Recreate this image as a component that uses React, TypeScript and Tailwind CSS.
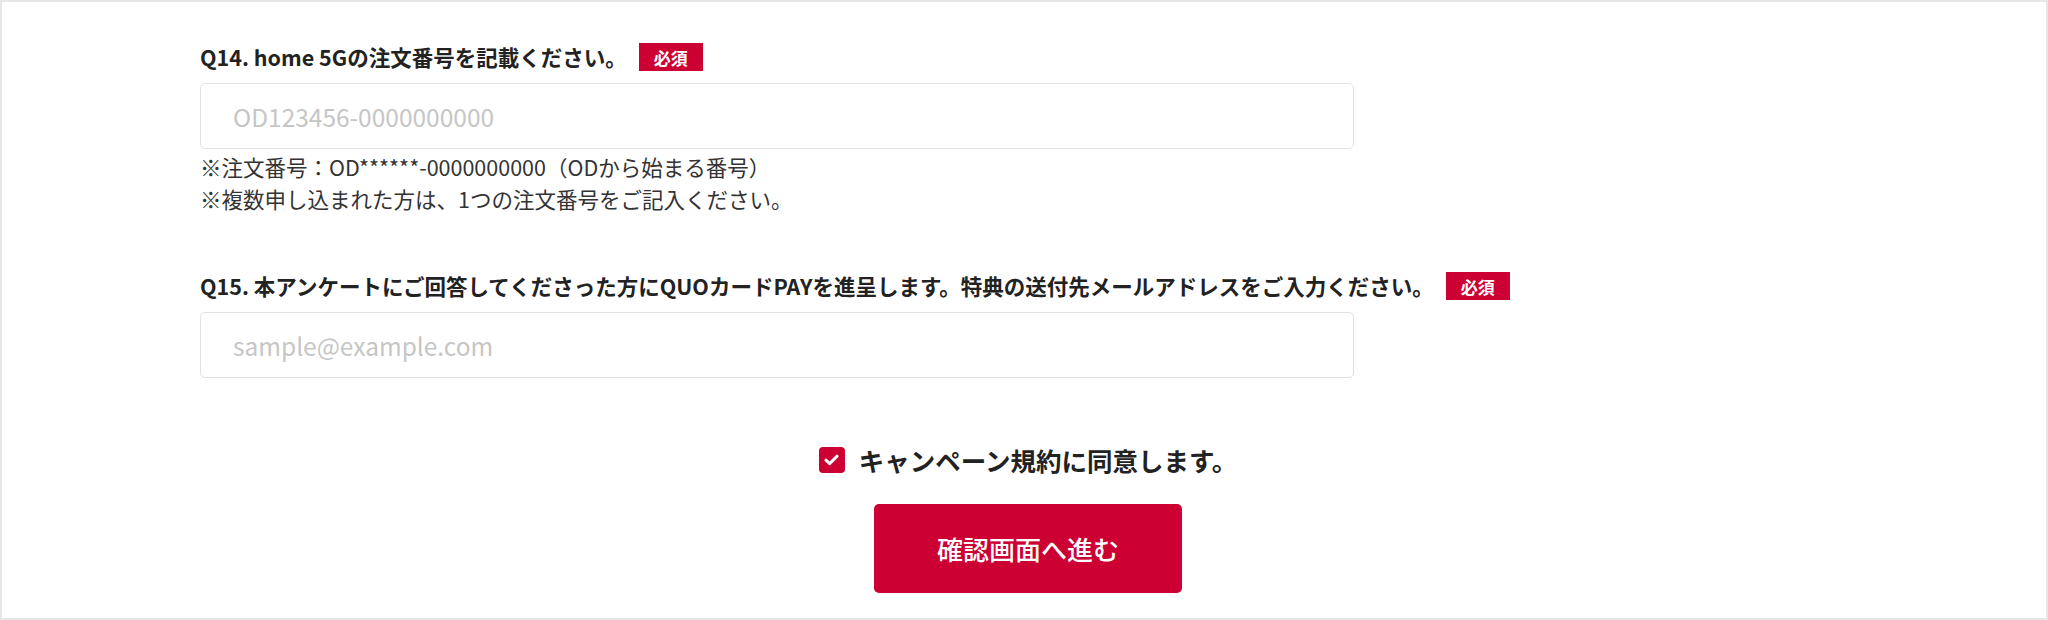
import React from "react";

const font = { fontFamily: '"Noto Sans CJK JP", "Noto Sans", sans-serif' };

function Badge() {
  return (
    <span className="ml-[12px] inline-flex h-[28px] w-[64px] items-center justify-center bg-[#cc0033] text-[17px] font-bold leading-none text-white">
      必須
    </span>
  );
}

export default function App() {
  return (
    <div
      className="h-[620px] w-[2048px] border-2 border-[#e6e6e6] bg-white px-[198px] pt-[41px] text-[#222]"
      style={font}
    >
      <div className="flex h-[28px] items-center">
        <span className="text-[21.5px] font-bold leading-none">Q14. home 5Gの注文番号を記載ください。</span>
        <Badge />
      </div>
      <input
        type="text"
        placeholder="OD123456-0000000000"
        className="mt-3 block h-[66px] w-[70%] rounded-[5px] border border-[#e2e2e2] bg-white px-[32px] text-[24.5px] text-[#222] outline-none placeholder:text-[#c6c6c6]"
        style={font}
      />
      <div className="mt-[2px] text-[21.5px] leading-[32px] text-[#333]">
        <p>※注文番号：OD******-0000000000（ODから始まる番号）</p>
        <p>※複数申し込まれた方は、1つの注文番号をご記入ください。</p>
      </div>

      <div className="mt-[57px] flex h-[28px] items-center">
        <span className="text-[21.5px] font-bold leading-none">
          Q15. 本アンケートにご回答してくださった方にQUOカードPAYを進呈します。特典の送付先メールアドレスをご入力ください。
        </span>
        <Badge />
      </div>
      <input
        type="text"
        placeholder="sample@example.com"
        className="mt-3 block h-[66px] w-[70%] rounded-[5px] border border-[#e2e2e2] bg-white px-[32px] text-[24.5px] text-[#222] outline-none placeholder:text-[#c6c6c6]"
        style={font}
      />

      <div className="mt-[66px] flex h-[32px] items-center justify-center pl-[8px]">
        <span className="flex h-[26px] w-[26px] items-center justify-center rounded-[4px] bg-[#cc0033]">
          <svg width="15" height="12" viewBox="0 0 15 12" fill="none">
            <path d="M2 6.2 L5.6 9.6 L13 2.2" stroke="#fff" strokeWidth="3" strokeLinecap="round" strokeLinejoin="round" />
          </svg>
        </span>
        <span className="ml-[14px] text-[25.5px] font-bold leading-none text-[#222]">キャンペーン規約に同意します。</span>
      </div>

      <div className="mt-[28px] flex justify-center pl-[8px]">
        <button
          type="button"
          className="flex h-[89px] w-[308px] items-center justify-center rounded-[5px] bg-[#cc0033] text-[26px] font-medium text-white"
          style={font}
        >
          確認画面へ進む
        </button>
      </div>
    </div>
  );
}
